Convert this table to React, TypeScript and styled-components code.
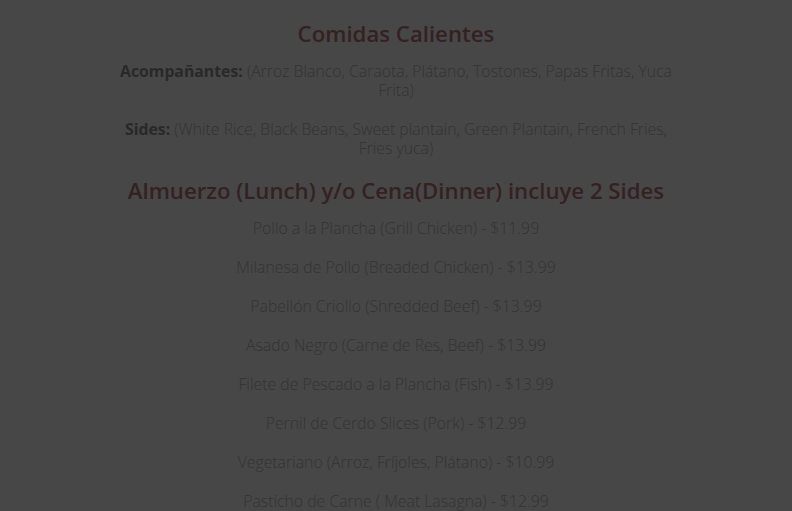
import styled, { createGlobalStyle } from 'styled-components'

const GlobalStyle = createGlobalStyle`
  html, body {
    margin: 0;
    padding: 0;
    background: #474747;
  }
  body {
    font-family: "Open Sans", "Noto Sans", Arial, sans-serif;
  }
`

const platos = [
  'Pollo a la Plancha (Grill Chicken) - $11.99',
  'Milanesa de Pollo (Breaded Chicken) - $13.99',
  'Pabellón Criollo (Shredded Beef) - $13.99',
  'Asado Negro (Carne de Res, Beef) - $13.99',
  'Filete de Pescado a la Plancha (Fish) - $13.99',
  'Pernil de Cerdo Slices (Pork) - $12.99',
  'Vegetariano (Arroz, Fríjoles, Plátano) - $10.99',
  'Pasticho de Carne ( Meat Lasagna) - $12.99',
]

export default function App() {
  return (
    <>
      <GlobalStyle />
      <Page>
        <Menu>
          <Heading>Comidas Calientes</Heading>
          <Text>
            <strong>Acompañantes:</strong> (Arroz Blanco, Caraota, Plátano, Tostones, Papas Fritas, Yuca
            Frita)
          </Text>
          <Text>
            <strong>Sides:</strong> (White Rice, Black Beans, Sweet plantain, Green Plantain, French Fries,
            Fries yuca)
          </Text>
          <Heading>Almuerzo (Lunch) y/o Cena(Dinner) incluye 2 Sides</Heading>
          {platos.map((plato) => (
            <Text key={plato}>{plato}</Text>
          ))}
        </Menu>
      </Page>
    </>
  )
}

const Page = styled.div`
  min-height: 511px;
  padding-top: 21px;
  box-sizing: border-box;
  overflow: hidden;
`

const Menu = styled.div`
  width: 562px;
  margin: 0 auto;
  text-align: center;
`

const Heading = styled.h2`
  margin: 0 0 15px;
  font-size: 22.2px;
  line-height: 26px;
  font-weight: 600;
  color: #352121;
`

const Text = styled.p`
  margin: 0 0 20px;
  font-size: 15.8px;
  line-height: 19px;
  font-weight: 300;
  color: #333333;
  strong {
    font-weight: 700;
    font-size: 15.8px;
    color: #292929;
  }
`
